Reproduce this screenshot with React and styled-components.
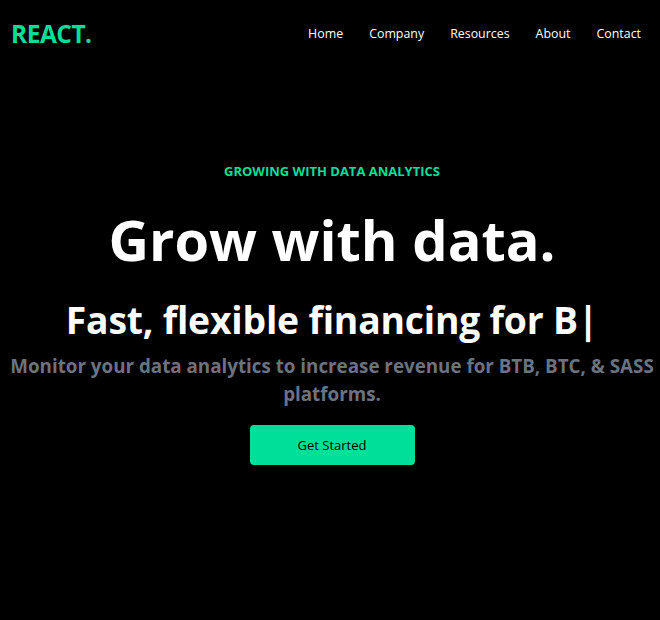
import React from 'react'
import styled, { createGlobalStyle } from 'styled-components'

const GlobalStyle = createGlobalStyle`
    body {
        margin: 0;
        background-color: #000;
        font-family: "Open Sans", "Noto Sans", sans-serif;
    }
`

const links = ['Home', 'Company', 'Resources', 'About', 'Contact']

function App() {
    return (
        <Page>
            <GlobalStyle />
            <Navbar>
                <Logo>REACT.</Logo>
                <Menu>
                    {links.map((l) => (
                        <li key={l}>{l}</li>
                    ))}
                </Menu>
            </Navbar>
            <Hero>
                <Eyebrow>GROWING WITH DATA ANALYTICS</Eyebrow>
                <Title>Grow with data.</Title>
                <Typed>Fast, flexible financing for B|</Typed>
                <Lead>
                    Monitor your data analytics to increase revenue for BTB, BTC, &amp; SASS platforms.
                </Lead>
                <StartButton type="button">Get Started</StartButton>
            </Hero>
        </Page>
    )
}

export default App

const Page = styled.div`
    width: 100%;
    min-height: 620px;
    background-color: #000;
    color: #fff;
`
const Navbar = styled.nav`
    height: 67px;
    display: flex;
    align-items: center;
    justify-content: space-between;
    padding: 0 19px 0 11px;
    box-sizing: border-box;
`
const Logo = styled.h1`
    margin: 0;
    font-size: 24.5px;
    font-weight: 700;
    color: #00df9a;
    letter-spacing: -0.5px;
`
const Menu = styled.ul`
    display: flex;
    gap: 26px;
    list-style: none;
    margin: 0;
    padding: 0;
    li {
        font-size: 12.4px;
        color: #fff;
        cursor: pointer;
    }
`
const Hero = styled.div`
    display: flex;
    flex-direction: column;
    align-items: center;
    text-align: center;
    padding: 92px 0 0 4px;
`
const Eyebrow = styled.p`
    margin: 0;
    font-size: 13px;
    line-height: 24px;
    font-weight: 700;
    color: #00df9a;
`
const Title = styled.h1`
    margin: 26px 0 0;
    font-size: 56px;
    line-height: 60px;
    font-weight: 700;
`
const Typed = styled.p`
    margin: 31px 0 0;
    font-size: 37.3px;
    line-height: 40px;
    font-weight: 700;
    letter-spacing: -0.2px;
`
const Lead = styled.p`
    margin: 12px 0 0;
    font-size: 18.8px;
    line-height: 28px;
    font-weight: 700;
    color: #6b7280;
`
const StartButton = styled.button`
    margin-top: 17px;
    width: 165px;
    height: 40px;
    border: none;
    border-radius: 4px;
    background-color: #00df9a;
    color: #000;
    font-family: inherit;
    font-size: 13px;
    font-weight: 500;
    cursor: pointer;
`
